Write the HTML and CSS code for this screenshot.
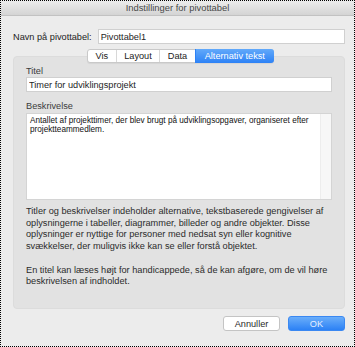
FILE: index.html
```html
<!DOCTYPE html>
<html lang="da">
<head>
    <meta charset="UTF-8">
    <title>Indstillinger for pivottabel</title>
    <link rel="stylesheet" href="styles.css">
</head>
<body>

<div class="window">
    <div class="titlebar">Indstillinger for pivottabel</div>

    <div class="name-row">
        <label for="pivot_name">Navn på pivottabel:</label>
        <input type="text" id="pivot_name" value="Pivottabel1">
    </div>

    <div class="tab-row">
        <div class="tabs">
            <span class="tab">Vis</span>
            <span class="tab">Layout</span>
            <span class="tab">Data</span>
            <span class="tab active">Alternativ tekst</span>
        </div>
    </div>

    <div class="group">
        <label class="field-label" for="alt_title">Titel</label>
        <input type="text" id="alt_title" class="field" value="Timer for udviklingsprojekt">

        <label class="field-label" for="alt_desc">Beskrivelse</label>
        <div class="desc-box">
            <div class="desc-text" id="alt_desc">Antallet af projekttimer, der blev brugt på udviklingsopgaver, organiseret efter projektteammedlem.</div>
            <div class="scroll-track"></div>
        </div>

        <p class="help">Titler og beskrivelser indeholder alternative, tekstbaserede gengivelser af oplysningerne i tabeller, diagrammer, billeder og andre objekter. Disse oplysninger er nyttige for personer med nedsat syn eller kognitive svækkelser, der muligvis ikke kan se eller forstå objektet.</p>
        <p class="help">En titel kan læses højt for handicappede, så de kan afgøre, om de vil høre beskrivelsen af indholdet.</p>
    </div>

    <div class="buttons">
        <button class="btn">Annuller</button>
        <button class="btn primary">OK</button>
    </div>
</div>

</body>
</html>
```

FILE: styles.css
```css
body {
    margin: 0;
    font-family: "Liberation Sans", Arial, sans-serif;
    font-size: 9.2px;
    color: #262626;
}

.window {
    width: 355px;
    height: 347px;
    box-sizing: border-box;
    border: 1px dotted #000;
    background: #ececec;
}

.titlebar {
    height: 14px;
    line-height: 14px;
    text-align: center;
    font-size: 9.4px;
    color: #4a4a4a;
    background: linear-gradient(#ececec, #d4d4d4);
    border-bottom: 1px solid #c2c2c2;
}

.name-row {
    display: flex;
    align-items: center;
    gap: 6px;
    margin: 13px 9px 0 12px;
}

.name-row label {
    white-space: nowrap;
    color: #222;
}

.name-row input, .field {
    flex: 1;
    height: 15px;
    box-sizing: border-box;
    border: 1px solid #d0d0d0;
    background: #fff;
    font-family: inherit;
    font-size: 9.2px;
    color: #1e1e1e;
    padding: 0 2px;
    margin: 0;
    outline: none;
}

.tab-row {
    position: relative;
    z-index: 1;
    display: flex;
    justify-content: center;
    margin: 5px 6px -7px 12px;
}

.tabs {
    display: flex;
    border: 1px solid #c9c9c9;
    border-radius: 3px;
    background: #fff;
    box-shadow: 0 1px 1px rgba(0, 0, 0, 0.06);
}

.tab {
    height: 12px;
    line-height: 12px;
    padding: 0 7.5px;
    border-left: 1px solid #d8d8d8;
    color: #222;
}

.tab:first-child {
    border-left: none;
}

.tab.active {
    padding: 0 9px;
    margin: -1px -1px -1px 0;
    height: 14px;
    line-height: 14px;
    background: linear-gradient(#62a9fa, #2d82f6);
    color: #fff;
    border-left-color: #2d82f6;
    border-radius: 0 3px 3px 0;
}

.group {
    margin: 0 9px 0 12px;
    padding: 8px 12px 0 12px;
    height: 253px;
    box-sizing: border-box;
    background: #e2e2e2;
    border: 1px solid #dcdcdc;
    border-radius: 4px;
}

.field-label {
    display: block;
    line-height: 12px;
    color: #3c3c3c;
}

.field {
    display: block;
    width: 100%;
    margin-bottom: 8px;
}

.desc-box {
    display: flex;
    height: 87px;
    margin-top: 1px;
    box-sizing: border-box;
    border: 1px solid #d4d4d4;
    background: #fff;
}

.desc-text {
    flex: 1;
    padding: 2px 3px;
    font-size: 8.2px;
    line-height: 9px;
    color: #111;
}

.scroll-track {
    width: 10px;
    background: #f7f7f7;
    border-left: 1px solid #ededed;
}

.help {
    margin: 6px 0 12.5px 0;
    line-height: 11.5px;
    color: #2b2b2b;
}

.buttons {
    display: flex;
    justify-content: flex-end;
    gap: 8px;
    margin: 7px 9px 0 0;
}

.btn {
    width: 57px;
    height: 15px;
    padding: 0;
    font-family: inherit;
    font-size: 9.2px;
    color: #2a2a2a;
    background: #fff;
    border: 1px solid #c4c4c4;
    border-radius: 3px;
}

.btn.primary {
    color: #e4efff;
    background: linear-gradient(#6aaefa, #2c81f5);
    border-color: #3a88f2;
}
```
